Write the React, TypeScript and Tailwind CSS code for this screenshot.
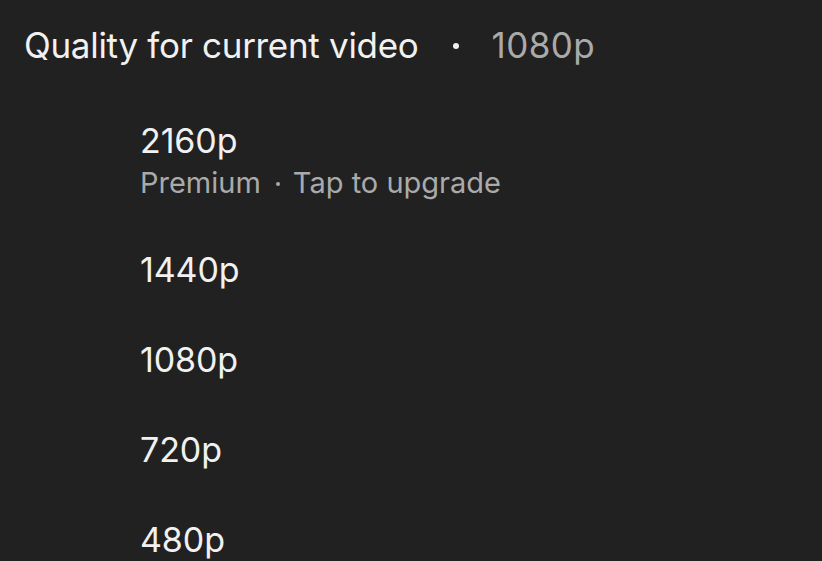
export default function App() {
  const items = ["1440p", "1080p", "720p", "480p"];
  return (
    <div
      className="w-[822px] h-[561px] overflow-hidden bg-[#212121] text-[#f1f1f1]"
      style={{ fontFamily: "Inter, 'Noto Sans', sans-serif" }}
    >
      <div className="flex items-center pl-[24px] pt-[25px] h-[65px] text-[35px] leading-[40px]">
        <span className="tracking-[-0.3px]">Quality for current video</span>
        <span className="ml-[34px] w-[6px] h-[6px] rounded-full bg-[#f1f1f1] mt-[2px]" />
        <span className="ml-[33px] text-[#aaaaaa] tracking-[0.4px]">1080p</span>
      </div>
      <div className="pl-[140px] pt-[56px] flex flex-col">
        <div className="flex flex-col gap-[4px]">
          <span className="text-[34px] leading-[40px] tracking-[-0.1px]">2160p</span>
          <span className="flex items-center text-[29px] leading-[36px] text-[#aaaaaa]">
            <span>Premium</span>
            <span className="ml-[15px] mr-[13px] w-[4px] h-[4px] rounded-full bg-[#aaaaaa] mt-[2px]" />
            <span>Tap to upgrade</span>
          </span>
        </div>
        <div className="flex flex-col pt-[49px] gap-[50px]">
          {items.map((q) => (
            <span key={q} className="text-[34px] leading-[40px] tracking-[-0.1px]">
              {q}
            </span>
          ))}
        </div>
      </div>
    </div>
  );
}
